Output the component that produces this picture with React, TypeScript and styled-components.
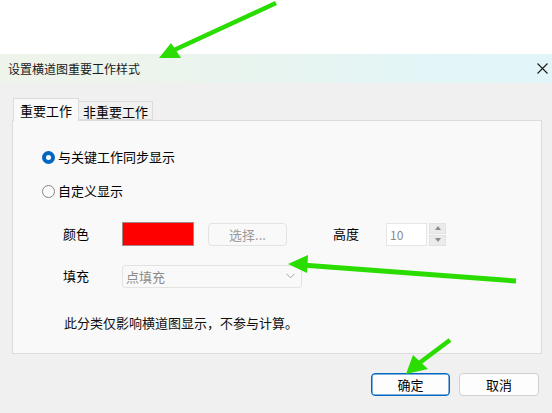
import React from "react";
import styled, { createGlobalStyle } from "styled-components";

const Global = createGlobalStyle`
  html, body { margin: 0; padding: 0; background: #ffffff; }
  body { font-family: "Noto Sans CJK SC", "Noto Sans", sans-serif; color: #000; }
  * { box-sizing: border-box; }
`;

const Page = styled.div`
  position: relative;
  width: 552px;
  height: 413px;
  overflow: hidden;
  display: flex;
  flex-direction: column;
  background: #ffffff;
`;

const TopSpace = styled.div`
  height: 54px;
  flex: none;
  background: #ffffff;
`;

const Dialog = styled.div`
  flex: 1;
  display: flex;
  flex-direction: column;
  background: #f0f0f0;
`;

const TitleBar = styled.div`
  height: 29px;
  flex: none;
  display: flex;
  align-items: center;
  justify-content: space-between;
  padding: 0 4px 0 8px;
  background: linear-gradient(90deg, #eff4ea 0%, #eaf4ee 40%, #e3f5f6 75%, #e2f5f8 100%);
`;

const Title = styled.span`
  font-size: 12px;
  line-height: 16px;
  color: #1a1a1a;
`;

const CloseBox = styled.div`
  width: 12px;
  height: 12px;
  display: flex;
  align-items: center;
  justify-content: center;
`;

const Body = styled.div`
  flex: 1;
  display: flex;
  flex-direction: column;
  padding: 15px 10px 0 12px;
`;

const TabRow = styled.div`
  display: flex;
  align-items: flex-end;
  padding-left: 1px;
  height: 23px;
  position: relative;
  z-index: 1;
  margin-bottom: -1px;
`;

const Tab = styled.div<{ $active?: boolean }>`
  height: ${(p) => (p.$active ? 23 : 19)}px;
  width: ${(p) => (p.$active ? 66 : 74)}px;
  margin-bottom: ${(p) => (p.$active ? 0 : 1)}px;
  border: 1px solid #dcdcdc;
  border-bottom: ${(p) => (p.$active ? "none" : "1px solid #dcdcdc")};
  border-left: ${(p) => (p.$active ? "1px solid #dcdcdc" : "none")};
  background: ${(p) => (p.$active ? "#f9f9f9" : "#f0f0f0")};
  font-size: 13px;
  line-height: 17px;
  padding-top: ${(p) => (p.$active ? 3 : 1)}px;
  padding-left: ${(p) => (p.$active ? 6 : 4)}px;
  color: #000;
`;

const Panel = styled.div`
  width: 530px;
  height: 234px;
  background: #f9f9f9;
  border: 1px solid #dcdcdc;
  display: flex;
  flex-direction: column;
  padding-top: 25px;
`;

const RadioRow = styled.div<{ $mt: number }>`
  display: flex;
  align-items: center;
  height: 20px;
  margin-top: ${(p) => p.$mt}px;
  padding-left: 29px;
  gap: 3px;
  font-size: 13px;
  line-height: 20px;
`;

const RadioCircle = styled.span<{ $checked?: boolean }>`
  width: 13px;
  height: 13px;
  border-radius: 50%;
  flex: none;
  background: ${(p) => (p.$checked ? "#ffffff" : "#fbfbfb")};
  border: ${(p) => (p.$checked ? "4px solid #0067c0" : "1px solid #858585")};
`;

const FormRow = styled.div<{ $mt: number }>`
  display: flex;
  align-items: center;
  height: 24px;
  margin-top: ${(p) => p.$mt}px;
  padding-left: 50px;
  font-size: 13px;
`;

const Label = styled.span<{ $w: number }>`
  width: ${(p) => p.$w}px;
  flex: none;
  font-size: 13px;
  line-height: 18px;
`;

const Swatch = styled.div`
  width: 72px;
  height: 24px;
  background: #ff0000;
  border: 1px solid #9d8a8a;
  flex: none;
`;

const DisabledButton = styled.div`
  margin-left: 14px;
  width: 79px;
  height: 23px;
  border: 1px solid #e3e3e3;
  border-radius: 4px;
  background: #f9f9f9;
  color: #9a9a9a;
  font-size: 13px;
  line-height: 21px;
  text-align: center;
  flex: none;
`;

const HeightLabel = styled(Label)`
  margin-left: 46px;
`;

const NumberBox = styled.div`
  width: 41px;
  height: 23px;
  background: #ffffff;
  border: 1px solid #e6e6e6;
  color: #8a8a8a;
  font-size: 12px;
  line-height: 21px;
  padding-left: 3px;
  flex: none;
`;

const Spinner = styled.div`
  margin-left: 2px;
  width: 17px;
  height: 23px;
  display: flex;
  flex-direction: column;
  gap: 1px;
  flex: none;
`;

const SpinHalf = styled.div`
  flex: 1;
  background: #ebebeb;
  border: 1px solid #e2e2e2;
  display: flex;
  align-items: center;
  justify-content: center;
`;

const Triangle = styled.span<{ $up?: boolean }>`
  width: 0;
  height: 0;
  border-left: 3.5px solid transparent;
  border-right: 3.5px solid transparent;
  ${(p) => (p.$up ? "border-bottom: 4px solid #8c8c8c;" : "border-top: 4px solid #8c8c8c;")}
`;

const SelectBox = styled.div`
  width: 180px;
  height: 23px;
  border: 1px solid #e3e3e3;
  border-radius: 3px;
  background: #f9f9f9;
  color: #8a8a8a;
  font-size: 13px;
  line-height: 21px;
  padding: 0 6px 0 3px;
  display: flex;
  align-items: center;
  justify-content: space-between;
  flex: none;
`;

const Note = styled.div`
  margin-top: 25px;
  padding-left: 51px;
  font-size: 13px;
  line-height: 20px;
  color: #111;
`;

const ButtonRow = styled.div`
  display: flex;
  justify-content: flex-end;
  gap: 9px;
  padding-right: 3px;
  margin-top: 19px;
`;

const DialogButton = styled.button<{ $primary?: boolean }>`
  width: ${(p) => (p.$primary ? 79 : 80)}px;
  height: 23px;
  border-radius: 4px;
  border: 1px solid ${(p) => (p.$primary ? "#0067c0" : "#d0d0d0")};
  box-shadow: ${(p) => (p.$primary ? "inset 0 0 0 0.5px #0067c0" : "none")};
  background: #fdfdfd;
  font-family: "Noto Sans CJK SC", "Noto Sans", sans-serif;
  font-size: 13px;
  line-height: 21px;
  color: #000;
  padding: 0;
  cursor: default;
`;

const Overlay = styled.svg`
  position: absolute;
  left: 0;
  top: 0;
  pointer-events: none;
`;

const GREEN = "#2bdc00";

export default function App() {
  return (
    <>
      <Global />
      <Page>
        <TopSpace />
        <Dialog>
          <TitleBar>
            <Title>设置横道图重要工作样式</Title>
            <CloseBox>
              <svg width="11" height="11" viewBox="0 0 11 11">
                <path d="M0.5 0.5 L10.5 10.5 M10.5 0.5 L0.5 10.5" stroke="#1a1a1a" strokeWidth="1.1" />
              </svg>
            </CloseBox>
          </TitleBar>
          <Body>
            <TabRow>
              <Tab $active>重要工作</Tab>
              <Tab>非重要工作</Tab>
            </TabRow>
            <Panel>
              <RadioRow $mt={1}>
                <RadioCircle $checked />
                与关键工作同步显示
              </RadioRow>
              <RadioRow $mt={14}>
                <RadioCircle />
                自定义显示
              </RadioRow>
              <FormRow $mt={21}>
                <Label $w={59}>颜色</Label>
                <Swatch />
                <DisabledButton>选择...</DisabledButton>
                <HeightLabel $w={53}>高度</HeightLabel>
                <NumberBox>10</NumberBox>
                <Spinner>
                  <SpinHalf>
                    <Triangle $up />
                  </SpinHalf>
                  <SpinHalf>
                    <Triangle />
                  </SpinHalf>
                </Spinner>
              </FormRow>
              <FormRow $mt={18}>
                <Label $w={59}>填充</Label>
                <SelectBox>
                  <span>点填充</span>
                  <svg width="9" height="6" viewBox="0 0 9 6">
                    <path d="M0.5 0.8 L4.5 4.8 L8.5 0.8" fill="none" stroke="#9a9a9a" strokeWidth="0.9" />
                  </svg>
                </SelectBox>
              </FormRow>
              <Note>此分类仅影响横道图显示，不参与计算。</Note>
            </Panel>
            <ButtonRow>
              <DialogButton $primary>确定</DialogButton>
              <DialogButton>取消</DialogButton>
            </ButtonRow>
          </Body>
        </Dialog>
        <Overlay width="552" height="413" viewBox="0 0 552 413">
          <line x1="276" y1="3" x2="172" y2="51" stroke={GREEN} strokeWidth="4.5" />
          <polygon points="159,58 171,43 181,58" fill={GREEN} />
          <line x1="516" y1="281" x2="302" y2="265" stroke={GREEN} strokeWidth="5" />
          <polygon points="288,264 308,255 307,273" fill={GREEN} />
          <line x1="450" y1="340" x2="418" y2="364" stroke={GREEN} strokeWidth="4.5" />
          <polygon points="406,374 413,355 428,369" fill={GREEN} />
        </Overlay>
      </Page>
    </>
  );
}
